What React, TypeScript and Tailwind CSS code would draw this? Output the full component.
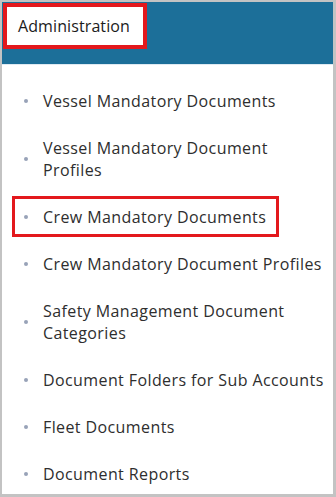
const items: { label: string; highlight?: boolean }[] = [
  { label: "Vessel Mandatory Documents" },
  { label: "Vessel Mandatory Document Profiles" },
  { label: "Crew Mandatory Documents", highlight: true },
  { label: "Crew Mandatory Document Profiles" },
  { label: "Safety Management Document Categories" },
  { label: "Document Folders for Sub Accounts" },
  { label: "Fleet Documents" },
  { label: "Document Reports" },
];

export default function App() {
  return (
    <div
      className="h-[497px] w-[336px] overflow-hidden border-t-2 border-r-[3px] border-b-[3px] border-l-2 border-[#c3c3c3] bg-white"
      style={{ fontFamily: '"Open Sans", "DejaVu Sans", sans-serif' }}
    >
      <div className="h-[63px] border-b border-[#dfeaf2] bg-[#1c6f99] pt-px">
        <div className="ml-px flex h-[46px] w-[144px] items-center border-4 border-[#e3181d] bg-white pl-[11px] text-[16px] tracking-[0.1px] text-[#1b1b1b]">
          Administration
        </div>
      </div>
      <ul className="pt-[12px]">
        {items.map((item) => (
          <li
            className="relative flex items-center py-[12.5px] pr-[4px] pl-[22px] text-[16px] leading-[22px] tracking-[0.4px] text-[#2e2e2e]"
            key={item.label}
          >
            <span className="mr-[15px] h-[4px] w-[4px] shrink-0 rounded-full bg-[#98a2b8]" />
            <span>{item.label}</span>
            {item.highlight && (
              <span className="absolute top-[3px] bottom-[3px] left-[10px] w-[267px] border-[3.5px] border-[#e3181d]" />
            )}
          </li>
        ))}
      </ul>
    </div>
  );
}
